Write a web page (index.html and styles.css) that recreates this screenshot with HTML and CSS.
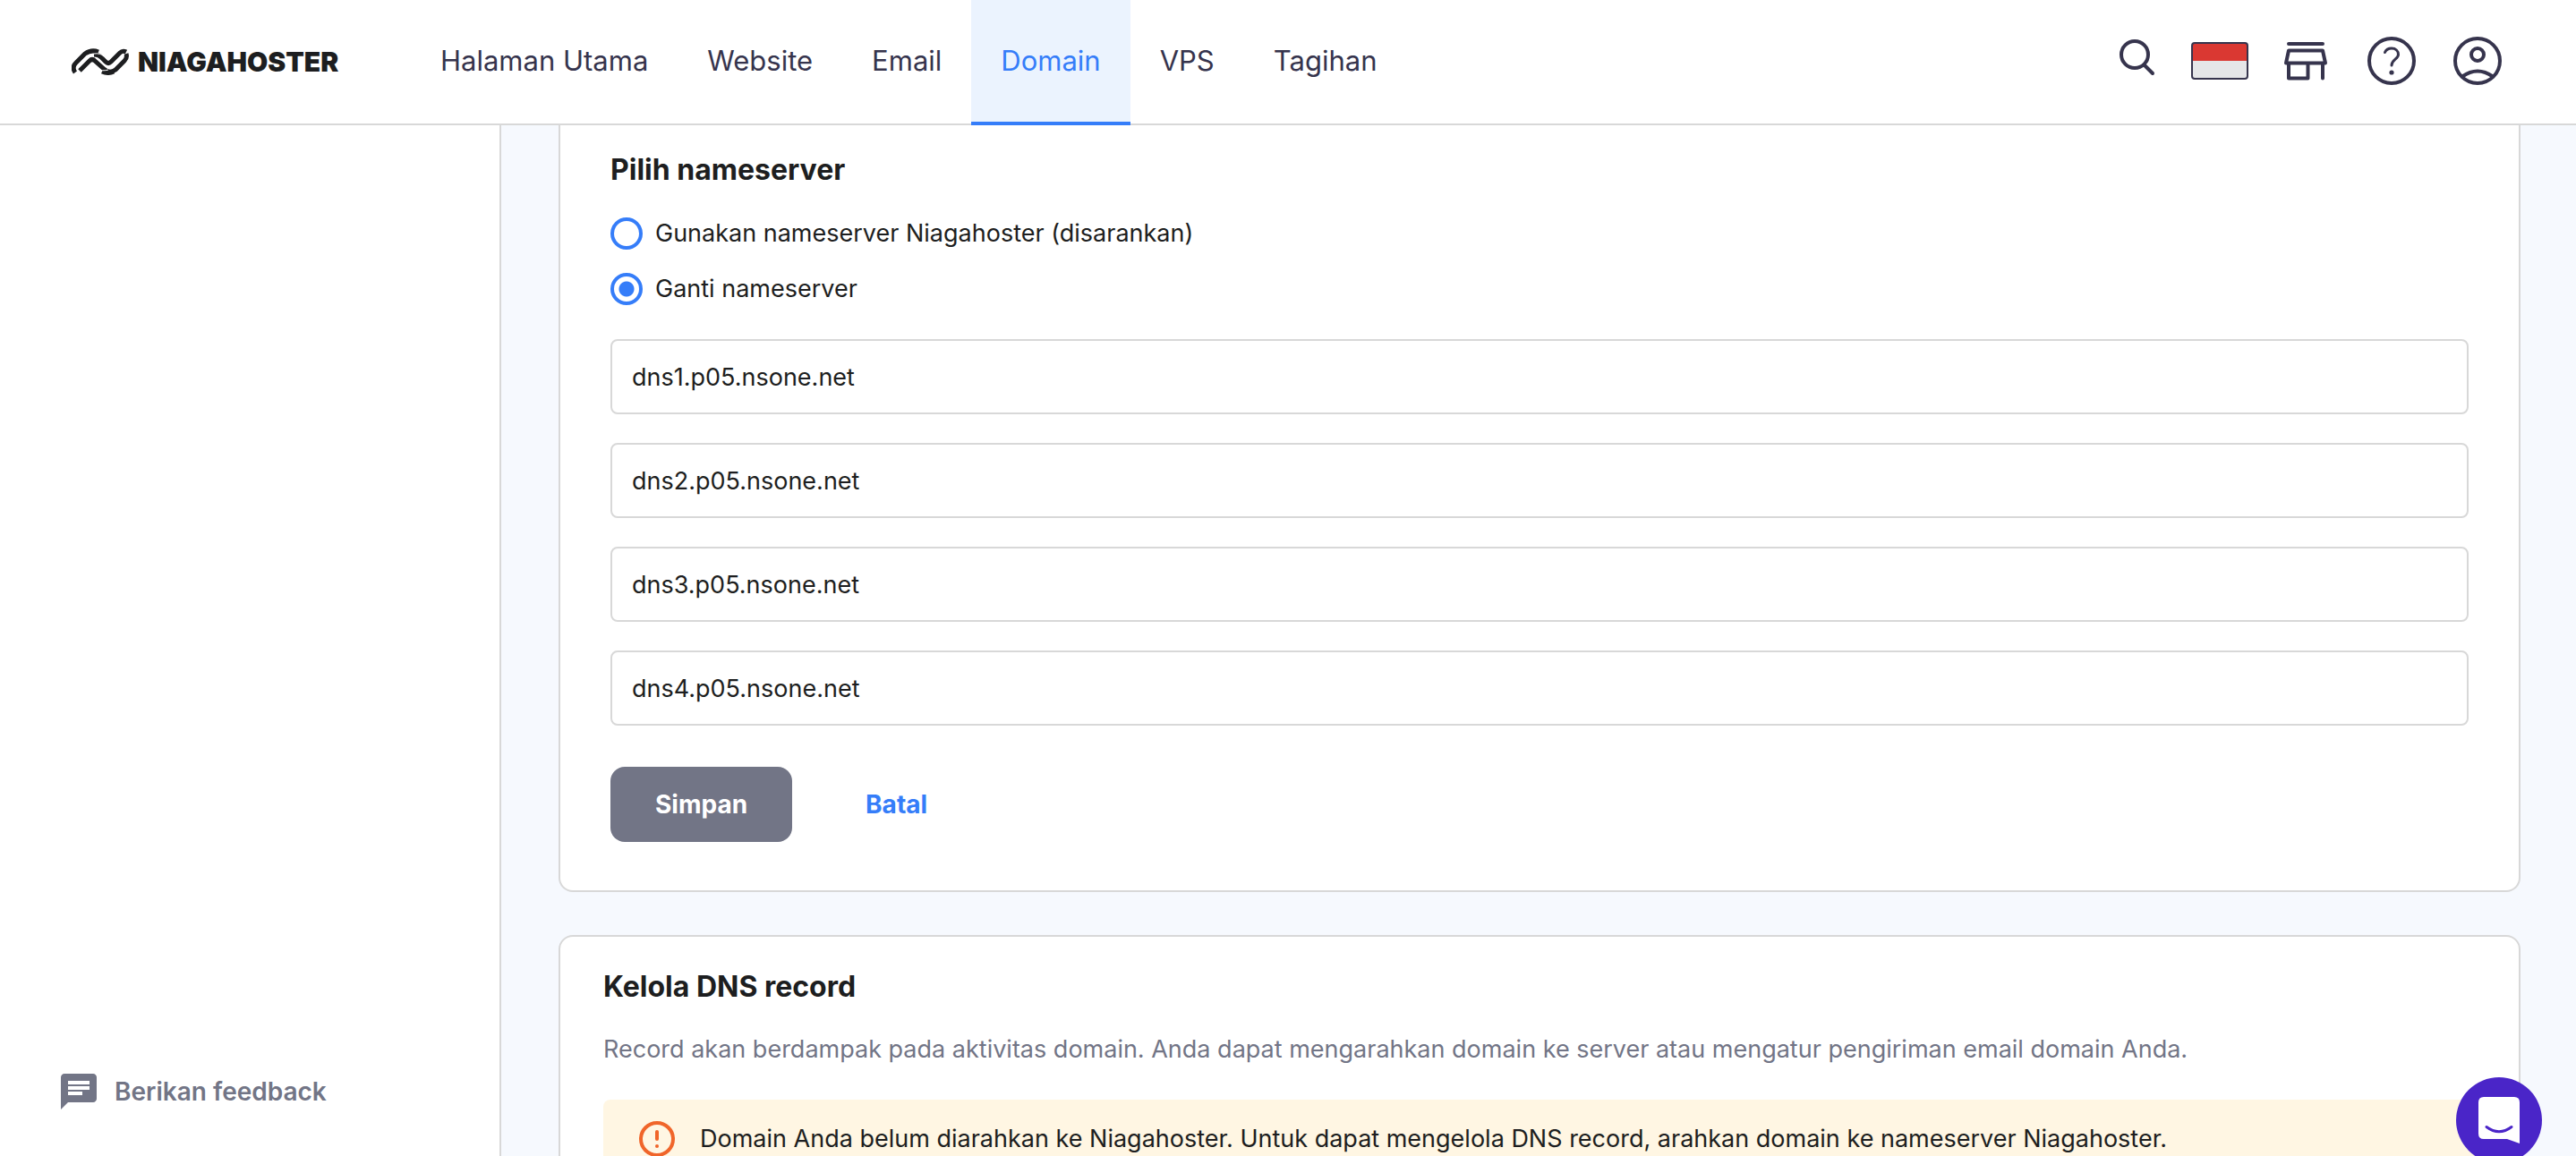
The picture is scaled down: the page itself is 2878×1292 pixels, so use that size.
FILE: index.html
```html
<!DOCTYPE html>
<html lang="id">
<head>
<meta charset="utf-8">
<meta name="viewport" content="width=device-width, initial-scale=1">
<title>Domain - Niagahoster</title>
<link rel="stylesheet" href="styles.css">
</head>
<body>
<header class="header">
  <a class="logo" href="#">
    <svg class="logo-mark" viewBox="0 0 64 30" aria-hidden="true">
      <g fill="none" stroke="#1d1e20" stroke-width="5">
        <path d="M4 27C1 23 2 19 5 16L15 6Q22 1 30 4"/>
        <path d="M9 25L20 14Q23 11 26 14L36 23Q42 29 49 24L59 14C62 11 62 9 61 6"/>
        <path d="M25 7Q30 7 33 10L38 15Q41 18 44 15L54 5Q57 2 61 4"/>
        <path d="M34 26Q41 29 47 26"/>
      </g>
      <path d="M25 6Q32 5 36 9" fill="none" stroke="#fff" stroke-width="1"/>
      <path d="M30 23Q34 26 41 24" fill="none" stroke="#fff" stroke-width="1"/>
    </svg>
    <span class="logo-name">NIAGAHOSTER</span>
  </a>
  <nav class="nav">
    <a class="nav-link" href="#">Halaman Utama</a>
    <a class="nav-link" href="#">Website</a>
    <a class="nav-link" href="#">Email</a>
    <a class="nav-link nav-link-active" href="#" aria-current="page">Domain</a>
    <a class="nav-link" href="#">VPS</a>
    <a class="nav-link" href="#">Tagihan</a>
  </nav>
  <div class="tools">
    <button class="tool" type="button" aria-label="Cari">
      <svg viewBox="0 0 64 64"><circle cx="33" cy="25" r="15"/><path d="M44 37l9 9"/></svg>
    </button>
    <button class="tool" type="button" aria-label="Bahasa">
      <svg viewBox="0 0 64 64"><rect class="flag-red" x="1" y="12" width="62" height="20"/><rect class="flag-white" x="1" y="32" width="62" height="20"/><rect class="flag-frame" x="1" y="12" width="62" height="40" rx="3"/></svg>
    </button>
    <button class="tool" type="button" aria-label="Toko">
      <svg viewBox="0 0 64 64"><path d="M13 13H51M13 20.500H51L54 34.500H10ZM13 35V51.500H34.500V35M51 35V51.500"/></svg>
    </button>
    <button class="tool" type="button" aria-label="Bantuan">
      <svg viewBox="0 0 64 64"><circle cx="32" cy="32" r="25"/><path class="thin" d="M24.500 22.500C26 19 29 18 32 18C36.500 18 39.500 21 39.500 25C39.500 30 32 30.500 32 37"/><circle class="dot" cx="32" cy="45" r="2.600"/></svg>
    </button>
    <button class="tool" type="button" aria-label="Akun">
      <svg viewBox="0 0 64 64"><circle cx="32" cy="32" r="25"/><circle cx="32" cy="25" r="7"/><path d="M15 49.500Q32 37.500 49 49.500"/></svg>
    </button>
  </div>
</header>

<div class="layout">
  <aside class="sidebar">
    <a class="feedback" href="#">
      <svg class="feedback-icon" viewBox="0 0 24 24" aria-hidden="true"><path fill="#727586" d="M20 2H4c-1.100 0-2 .9-2 2v18l4-4h14c1.100 0 2-.9 2-2V4c0-1.100-.9-2-2-2zM6 9h12v2H6V9zm8 5H6v-2h8v2zm4-6H6V6h12v2z"/></svg>
      Berikan feedback
    </a>
  </aside>

  <main class="content">
    <form class="card card-form">
      <fieldset class="choices">
        <legend class="title">Pilih nameserver</legend>
        <label class="choice"><input class="radio" type="radio" name="ns-mode">Gunakan nameserver Niagahoster (disarankan)</label>
        <label class="choice"><input class="radio" type="radio" name="ns-mode" checked>Ganti nameserver</label>
      </fieldset>
      <div class="fields">
        <input class="field" type="text" aria-label="Nameserver 1" value="dns1.p05.nsone.net">
        <input class="field" type="text" aria-label="Nameserver 2" value="dns2.p05.nsone.net">
        <input class="field" type="text" aria-label="Nameserver 3" value="dns3.p05.nsone.net">
        <input class="field" type="text" aria-label="Nameserver 4" value="dns4.p05.nsone.net">
      </div>
      <div class="actions">
        <button class="button button-save" type="submit">Simpan</button>
        <button class="button button-cancel" type="button">Batal</button>
      </div>
    </form>

    <section class="card card-dns">
      <h2 class="title">Kelola DNS record</h2>
      <p class="description">Record akan berdampak pada aktivitas domain. Anda dapat mengarahkan domain ke server atau mengatur pengiriman email domain Anda.</p>
      <div class="alert">
        <svg class="alert-icon" viewBox="0 0 40 40" aria-hidden="true"><circle cx="20" cy="20" r="18" fill="none" stroke="#f0652a" stroke-width="4"/><path d="M20 12v8" stroke="#f0652a" stroke-width="4" stroke-linecap="round"/><circle cx="20" cy="28" r="2" fill="#f0652a"/></svg>
        <p class="alert-text">Domain Anda belum diarahkan ke Niagahoster. Untuk dapat mengelola DNS record, arahkan domain ke nameserver Niagahoster.</p>
      </div>
    </section>
  </main>
</div>

<button class="chat" type="button" aria-label="Buka obrolan">
  <svg viewBox="0 0 96 96"><path fill="#fff" d="M31 22H65Q71 22 71 28V74L57 69H31Q25 69 25 63V28Q25 22 31 22Z"/><path d="M34 55.500Q48 66 62 55.500" fill="none" stroke="#4a25c8" stroke-width="3" stroke-linecap="round"/></svg>
</button>
</body>
</html>
```
FILE: styles.css
```css
*, *::before, *::after { box-sizing: border-box; }

body {
  display: flex;
  flex-direction: column;
  height: 100vh;
  margin: 0;
  overflow: hidden;
  background: #f6f9fe;
  color: #1d1e20;
  font: 400 27px/40px Inter, "Liberation Sans", sans-serif;
}

a { color: inherit; text-decoration: none; }
p, h2 { margin: 0; }
button, input { font: inherit; }
button { padding: 0; border: 0; background: none; cursor: pointer; }
svg { display: block; }

.header {
  display: flex;
  flex: none;
  height: 140px;
  padding: 0 78px 0 80px;
  border-bottom: 2px solid #d8d8d8;
  background: #fff;
}

.logo { display: flex; align-items: center; width: 379px; gap: 10px; }
.logo-mark { width: 64px; height: 30px; }
.logo-name { font-size: 30px; font-weight: 900; }

.nav { display: flex; margin-bottom: -2px; }
.nav-link {
  display: flex;
  align-items: center;
  padding: 0 33px;
  border-bottom: 4px solid transparent;
  color: #36344d;
  font-size: 31px;
}
.nav-link-active { border-color: #357df9; background: #ebf3fe; color: #357df9; }

.tools { display: flex; align-items: center; gap: 32px; margin-left: auto; padding-bottom: 2px; }
.tool { width: 64px; height: 64px; }
.tool svg {
  width: 64px;
  height: 64px;
  fill: none;
  stroke: #36344d;
  stroke-width: 4px;
  stroke-linecap: round;
  stroke-linejoin: round;
}
.tool .thin { stroke-width: 3px; }
.tool .dot { fill: #36344d; stroke: none; }
.tool .flag-red { fill: #da3832; stroke: none; }
.tool .flag-white { fill: #e5e6e8; stroke: none; }
.tool .flag-frame { stroke-width: 2px; }

.layout { display: flex; flex: 1; min-height: 0; }

.sidebar {
  display: flex;
  flex: none;
  align-items: flex-end;
  width: 560px;
  padding: 0 64px 48px;
  border-right: 2px solid #d8d8d8;
  background: #fff;
}
.feedback { display: flex; align-items: center; gap: 16px; color: #727586; font-size: 28px; font-weight: 600; }
.feedback-icon { width: 48px; height: 48px; }

.content {
  display: flex;
  flex: 1;
  flex-direction: column;
  gap: 48px;
  min-width: 0;
  padding: 0 62px 0 64px;
  overflow: hidden;
}

.card { flex: none; border: 2px solid #d8d8d8; border-radius: 16px; background: #fff; }
.card-form {
  display: flex;
  flex-direction: column;
  padding: 30px 56px 54px;
  border-top: 0;
  border-radius: 0 0 16px 16px;
}
.card-dns { padding: 36px 48px 48px; }
.title { padding: 0; font-size: 32px; font-weight: 700; line-height: 40px; }

.choices { margin: 0; padding: 0; border: 0; }
.choices .title { margin-bottom: 33px; }
.choice { display: flex; align-items: center; gap: 14px; line-height: 36px; }
.choice + .choice { margin-top: 26px; }
.radio {
  width: 36px;
  height: 36px;
  margin: 0;
  border: 4px solid #357df9;
  border-radius: 50%;
  appearance: none;
}
.radio:checked { background: radial-gradient(circle, #357df9 8px, transparent 9px); }

.fields { display: flex; flex-direction: column; gap: 32px; margin-top: 38px; }
.field {
  width: 100%;
  height: 84px;
  padding: 0 22px;
  border: 2px solid #d8d8d8;
  border-radius: 8px;
  background: #fff;
  color: inherit;
}

.actions { display: flex; gap: 32px; margin-top: 46px; }
.button { height: 84px; padding: 0 50px; border-radius: 16px; font-size: 28px; font-weight: 700; }
.button-save { background: #727586; color: #fff; }
.button-cancel { color: #357df9; }

.description { margin-top: 30px; color: #727586; }
.alert {
  display: flex;
  gap: 28px;
  margin-top: 36px;
  padding: 24px 40px;
  border-radius: 8px;
  background: #fff6e3;
}
.alert-icon { flex: none; width: 40px; height: 40px; }

.chat {
  position: fixed;
  right: 38px;
  bottom: -8px;
  width: 96px;
  height: 96px;
  border-radius: 50%;
  background: #4a25c8;
}
```
